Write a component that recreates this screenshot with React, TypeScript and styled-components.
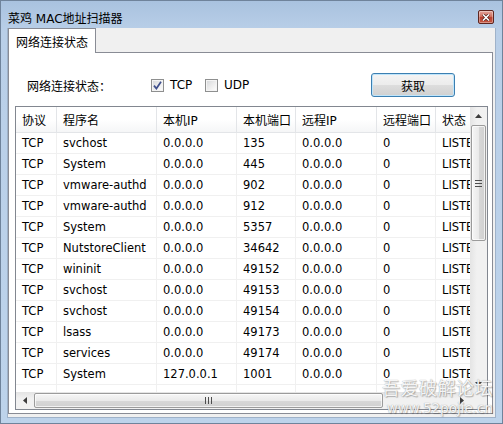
import { FunctionComponent } from "react";
import styled, { createGlobalStyle } from "styled-components";

const GlobalStyle = createGlobalStyle`
  html, body {
    margin: 0;
    padding: 0;
    background: #ffffff;
  }
`;

const Window = styled.div`
  position: relative;
  width: 503px;
  height: 424px;
  box-sizing: border-box;
  border: 1px solid #6f839b;
  background: linear-gradient(180deg, #a9c2df 0%, #b9cfe8 30px, #bdd3eb 100%);
  display: flex;
  flex-direction: column;
  overflow: hidden;
  font-family: "DejaVu Sans", "Noto Sans CJK SC", sans-serif;
  font-size: 12px;
  color: #000;
`;

const TitleBar = styled.div`
  flex: none;
  height: 27px;
  box-sizing: border-box;
  padding: 6px 8px 1px 7px;
  display: flex;
  align-items: center;
`;

const Title = styled.div`
  flex: 1;
  white-space: nowrap;
`;

const CloseButton = styled.div`
  width: 16px;
  height: 14px;
  box-sizing: border-box;
  border: 1px solid #5e2620;
  border-radius: 2px;
  background: linear-gradient(180deg, #e3a69c 0%, #d0705f 45%, #b8402f 55%, #c65a45 100%);
  box-shadow: inset 0 0 0 1px rgba(255, 255, 255, 0.35);
  display: flex;
  align-items: center;
  justify-content: center;
`;

const Body = styled.div`
  flex: 1;
  min-height: 0;
  display: flex;
  padding: 0 6px 5px 6px;
`;

const Client = styled.div`
  flex: 1;
  min-height: 0;
  display: flex;
  flex-direction: column;
  background: #f0f0f0;
  border: 1px solid #9fb2c9;
  border-top: none;
  padding: 0 2px 3px 0;
`;

const TabStrip = styled.div`
  flex: none;
  height: 24px;
  display: flex;
  align-items: flex-start;
`;

const Tab = styled.div`
  position: relative;
  z-index: 1;
  width: 88px;
  height: 25px;
  box-sizing: border-box;
  border: 1px solid #898c95;
  border-bottom: none;
  background: #ffffff;
  padding: 1px 0 0 7px;
  display: flex;
  align-items: center;
`;

const Panel = styled.div`
  flex: 1;
  min-height: 0;
  display: flex;
  flex-direction: column;
  border: 1px solid #898c95;
  background: #ffffff;
`;

const ControlsRow = styled.div`
  flex: none;
  height: 24px;
  margin: 20px 0 9px 0;
  padding: 0 37px 0 18px;
  display: flex;
  align-items: center;
`;

const FieldLabel = styled.div`
  width: 124px;
  padding-top: 1px;
  white-space: nowrap;
`;

const CheckItem = styled.label<{ $width?: number }>`
  width: ${(p) => (p.$width ? `${p.$width}px` : "auto")};
  display: flex;
  align-items: center;
  gap: 6px;
  font-size: 12px;
`;

const CheckBox = styled.div`
  width: 13px;
  height: 13px;
  box-sizing: border-box;
  border: 1px solid #8e8f8f;
  background: linear-gradient(135deg, #d4d6d9 0%, #eeeeee 55%, #ffffff 100%);
  box-shadow: inset 0 0 0 1px #f4f4f4;
  display: flex;
  align-items: center;
  justify-content: center;
`;

const PushButton = styled.div`
  margin-left: auto;
  width: 84px;
  height: 24px;
  box-sizing: border-box;
  border: 1px solid #3c7fb1;
  border-radius: 3px;
  background: linear-gradient(180deg, #f4f4f4 0%, #ececec 48%, #dddddd 52%, #d0d0d0 100%);
  box-shadow: inset 0 0 0 1px #bfe5fb;
  display: flex;
  align-items: center;
  justify-content: center;
`;

const ListView = styled.div`
  flex: 1;
  min-height: 0;
  margin: 0 4px 3px 6px;
  border: 1px solid #828790;
  display: grid;
  grid-template-columns: minmax(0, 1fr) 17px;
  grid-template-rows: minmax(0, 1fr) 17px;
`;

const ListContent = styled.div`
  overflow: hidden;
  min-height: 0;
`;

const COLS = "41px 100px 80px 59px 81px 59px 80px";

const HeaderRow = styled.div`
  height: 26px;
  display: grid;
  grid-template-columns: ${COLS};
  background: linear-gradient(180deg, #ffffff 0%, #ffffff 50%, #f5f6f7 100%);
  border-bottom: 1px solid #e3e5e8;
  box-sizing: border-box;
`;

const HeaderCell = styled.div`
  padding-left: 6px;
  border-right: 1px solid #e3e5e8;
  display: flex;
  align-items: center;
  white-space: nowrap;
  overflow: hidden;
`;

const DataRow = styled.div`
  height: 21px;
  display: grid;
  grid-template-columns: ${COLS};
`;

const DataCell = styled.div`
  padding-left: 6px;
  border-right: 1px solid #f0f0f0;
  border-bottom: 1px solid #f0f0f0;
  display: flex;
  align-items: center;
  white-space: nowrap;
  overflow: hidden;
  font-size: 11.5px;
`;

const VScroll = styled.div`
  min-height: 0;
  display: flex;
  flex-direction: column;
  background: linear-gradient(90deg, #e4e4e4 0%, #f1f1f1 40%, #f1f1f1 100%);
`;

const HScroll = styled.div`
  min-width: 0;
  display: flex;
  background: linear-gradient(180deg, #e4e4e4 0%, #f1f1f1 40%, #f1f1f1 100%);
`;

const Corner = styled.div`
  background: #f0f0f0;
`;

const ArrowBox = styled.div`
  width: 17px;
  height: 17px;
  flex: none;
  display: flex;
  align-items: center;
  justify-content: center;
`;

const Track = styled.div<{ $horizontal?: boolean }>`
  flex: 1;
  min-width: 0;
  min-height: 0;
  display: flex;
  flex-direction: ${(p) => (p.$horizontal ? "row" : "column")};
`;

const Thumb = styled.div<{ $horizontal?: boolean; $size: number }>`
  flex: none;
  ${(p) =>
    p.$horizontal
      ? `width: ${p.$size}px; height: 15px; margin: 1px 0 0 1px;`
      : `height: ${p.$size}px; width: 15px; margin: 1px 0 0 1px;`}
  box-sizing: border-box;
  border: 1px solid #9b9b9b;
  border-radius: 2px;
  background: linear-gradient(
    ${(p) => (p.$horizontal ? "180deg" : "90deg")},
    #f6f6f6 0%,
    #eaeaea 50%,
    #d8d8d8 51%,
    #d0d0d0 100%
  );
  box-shadow: inset 0 0 0 1px rgba(255, 255, 255, 0.7);
  display: flex;
  align-items: center;
  justify-content: center;
`;

const Watermark = styled.div`
  position: absolute;
  right: 9px;
  bottom: 6px;
  display: flex;
  flex-direction: column;
  align-items: flex-end;
  color: rgba(255, 255, 255, 0.92);
  text-shadow: 0 0 1px #8a8a8a, 1px 1px 1px rgba(0, 0, 0, 0.25);
  pointer-events: none;
`;

const WatermarkTitle = styled.div`
  font-size: 18px;
  line-height: 22px;
  letter-spacing: 0.5px;
`;

const WatermarkUrl = styled.div`
  font-size: 13.5px;
  line-height: 17px;
`;

type Conn = [string, string, string, string, string, string, string];

const rows: Conn[] = [
  ["TCP", "svchost", "0.0.0.0", "135", "0.0.0.0", "0", "LISTENING"],
  ["TCP", "System", "0.0.0.0", "445", "0.0.0.0", "0", "LISTENING"],
  ["TCP", "vmware-authd", "0.0.0.0", "902", "0.0.0.0", "0", "LISTENING"],
  ["TCP", "vmware-authd", "0.0.0.0", "912", "0.0.0.0", "0", "LISTENING"],
  ["TCP", "System", "0.0.0.0", "5357", "0.0.0.0", "0", "LISTENING"],
  ["TCP", "NutstoreClient", "0.0.0.0", "34642", "0.0.0.0", "0", "LISTENING"],
  ["TCP", "wininit", "0.0.0.0", "49152", "0.0.0.0", "0", "LISTENING"],
  ["TCP", "svchost", "0.0.0.0", "49153", "0.0.0.0", "0", "LISTENING"],
  ["TCP", "svchost", "0.0.0.0", "49154", "0.0.0.0", "0", "LISTENING"],
  ["TCP", "lsass", "0.0.0.0", "49173", "0.0.0.0", "0", "LISTENING"],
  ["TCP", "services", "0.0.0.0", "49174", "0.0.0.0", "0", "LISTENING"],
  ["TCP", "System", "127.0.0.1", "1001", "0.0.0.0", "0", "LISTENING"],
  ["", "", "", "", "", "", ""],
];

const headers = ["协议", "程序名", "本机IP", "本机端口", "远程IP", "远程端口", "状态"];

const Arrow: FunctionComponent<{ dir: "up" | "down" | "left" | "right" }> = ({ dir }) => {
  const pts = {
    up: "0,4 3.5,0 7,4",
    down: "0,0 3.5,4 7,0",
    left: "4,0 0,3.5 4,7",
    right: "0,0 4,3.5 0,7",
  }[dir];
  const w = dir === "up" || dir === "down" ? 7 : 4;
  const h = dir === "up" || dir === "down" ? 4 : 7;
  return (
    <svg width={w} height={h} viewBox={`0 0 ${w} ${h}`}>
      <polygon points={pts} fill="#3d3d3d" />
    </svg>
  );
};

const Grip: FunctionComponent<{ horizontal?: boolean }> = ({ horizontal }) =>
  horizontal ? (
    <svg width="7" height="7" viewBox="0 0 7 7">
      <path d="M0.5 0v7M3.5 0v7M6.5 0v7" stroke="#4d4d4d" strokeWidth="1" />
    </svg>
  ) : (
    <svg width="7" height="7" viewBox="0 0 7 7">
      <path d="M0 0.5h7M0 3.5h7M0 6.5h7" stroke="#4d4d4d" strokeWidth="1" />
    </svg>
  );

const Check: FunctionComponent<{ checked?: boolean }> = ({ checked }) => (
  <CheckBox>
    {checked && (
      <svg width="9" height="9" viewBox="0 0 9 9">
        <path d="M1 4.6 L3.4 7.6 L8 0.8" stroke="#3f4f8c" strokeWidth="1.7" fill="none" />
      </svg>
    )}
  </CheckBox>
);

const App: FunctionComponent = () => {
  return (
    <>
      <GlobalStyle />
      <Window>
        <TitleBar>
          <Title>菜鸡 MAC地址扫描器</Title>
          <CloseButton>
            <svg width="8" height="7" viewBox="0 0 8 7">
              <path d="M1 0.5 L7 6.5 M7 0.5 L1 6.5" stroke="#4a1d18" strokeWidth="3" />
              <path d="M1 0.5 L7 6.5 M7 0.5 L1 6.5" stroke="#ffffff" strokeWidth="1.6" />
            </svg>
          </CloseButton>
        </TitleBar>
        <Body>
          <Client>
            <TabStrip>
              <Tab>网络连接状态</Tab>
            </TabStrip>
            <Panel>
              <ControlsRow>
                <FieldLabel>网络连接状态：</FieldLabel>
                <CheckItem $width={54}>
                  <Check checked />
                  TCP
                </CheckItem>
                <CheckItem>
                  <Check />
                  UDP
                </CheckItem>
                <PushButton>获取</PushButton>
              </ControlsRow>
              <ListView>
                <ListContent>
                  <HeaderRow>
                    {headers.map((h) => (
                      <HeaderCell key={h}>{h}</HeaderCell>
                    ))}
                  </HeaderRow>
                  {rows.map((r, i) => (
                    <DataRow key={i}>
                      {r.map((c, j) => (
                        <DataCell key={j}>{c}</DataCell>
                      ))}
                    </DataRow>
                  ))}
                </ListContent>
                <VScroll>
                  <ArrowBox>
                    <Arrow dir="up" />
                  </ArrowBox>
                  <Track>
                    <Thumb $size={116}>
                      <Grip />
                    </Thumb>
                  </Track>
                  <ArrowBox>
                    <Arrow dir="down" />
                  </ArrowBox>
                </VScroll>
                <HScroll>
                  <ArrowBox>
                    <Arrow dir="left" />
                  </ArrowBox>
                  <Track $horizontal>
                    <Thumb $horizontal $size={349}>
                      <Grip horizontal />
                    </Thumb>
                  </Track>
                  <ArrowBox>
                    <Arrow dir="right" />
                  </ArrowBox>
                </HScroll>
                <Corner />
              </ListView>
            </Panel>
          </Client>
        </Body>
        <Watermark>
          <WatermarkTitle>吾爱破解论坛</WatermarkTitle>
          <WatermarkUrl>www.52pojie.cn</WatermarkUrl>
        </Watermark>
      </Window>
    </>
  );
};

export default App;
